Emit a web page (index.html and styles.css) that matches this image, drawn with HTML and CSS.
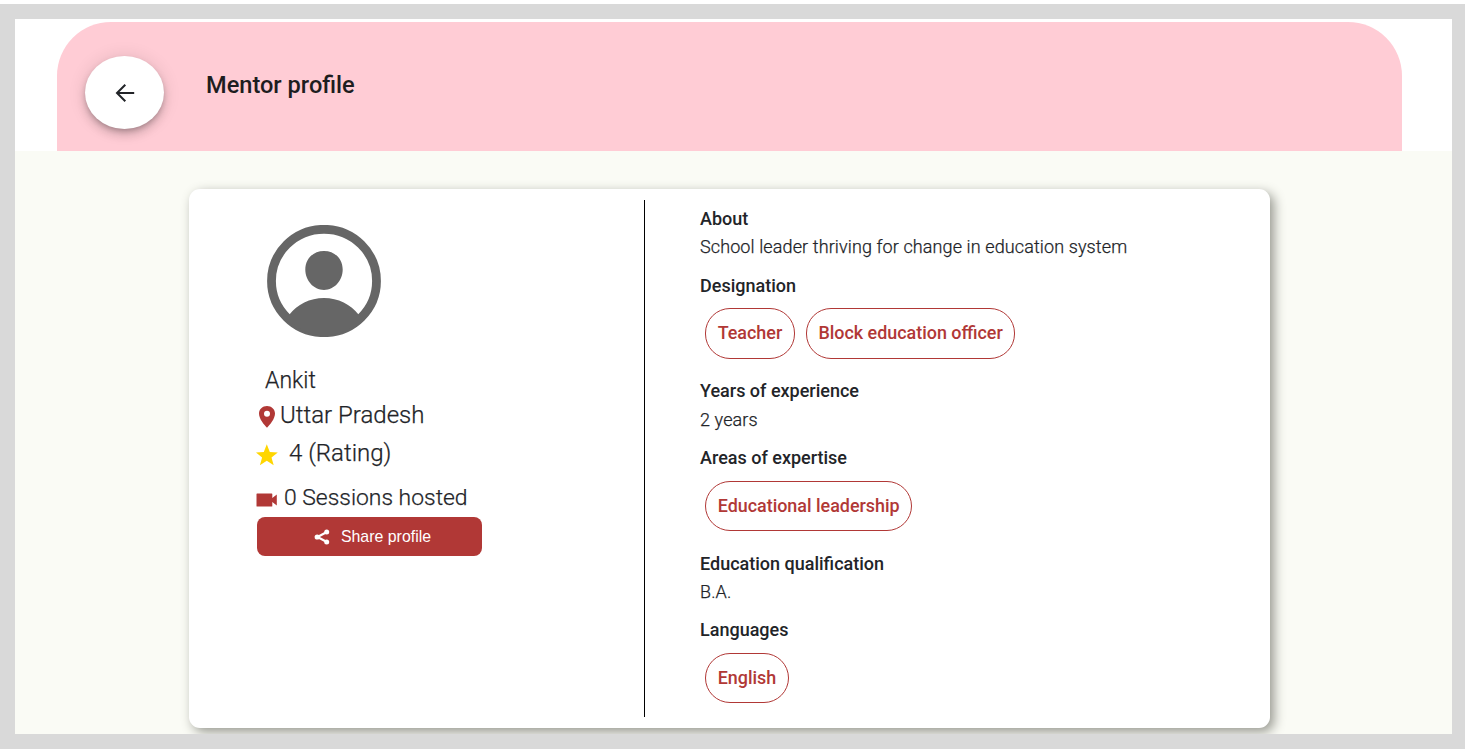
FILE: index.html
```html
<!DOCTYPE html>
<html lang="en">
<head>
<meta charset="utf-8">
<title>Mentor profile</title>
<link rel="stylesheet" href="styles.css">
</head>
<body>
<div class="frame">
  <div class="screen">
    <header class="topbar">
      <div class="banner">
        <button class="back" aria-label="Back">
          <svg width="20" height="20" viewBox="0 0 20 20"><path d="M10.300 1.700 2 10l8.300 8.300M2 10h17.200" fill="none" stroke="#222428" stroke-width="2"/></svg>
        </button>
        <h1 class="title">Mentor profile</h1>
      </div>
    </header>
    <main class="content">
      <section class="card">
        <div class="summary">
          <svg class="avatar" width="114" height="112" viewBox="0 0 114 112"><ellipse cx="57" cy="56" rx="52.500" ry="51.700" fill="none" stroke="#666" stroke-width="8.800"/><path d="M57 26c11 0 18.700 8 18.700 18.600C75.700 55.500 67.500 65 57 65s-18.700-9.500-18.700-20.400C38.300 34 46 26 57 26zM22.500 89.500C30 79.500 43 73 57 73s27 6.500 34.500 16.500L96 91c-9 11-23 19.500-39 19.500S27 102 18 91z" fill="#666"/></svg>
          <div class="name">Ankit</div>
          <div class="fact place">
            <svg width="22" height="24" viewBox="0 0 22 24"><path fill-rule="evenodd" d="M11 1C6.500 1 3 4.300 3 8.600c0 5.400 5.300 11.400 8 14.200 2.700-2.800 8-8.800 8-14.200C19 4.300 15.500 1 11 1zm0 10.800a3 3 0 1 1 0-6 3 3 0 0 1 0 6z" fill="#b13836"/></svg>
            <span>Uttar Pradesh</span>
          </div>
          <div class="fact rating">
            <svg width="22" height="22" viewBox="0 0 22 22"><path d="M10.800.300l3 7.700 8 .4-6.300 5 2.200 7.900-6.900-4.500-6.900 4.500 2.200-7.900L-.2 8.400l8-.4z" fill="#ffd600"/></svg>
            <span>4 (Rating)</span>
          </div>
          <div class="fact sessions">
            <svg width="22" height="14" viewBox="0 0 22 14"><path d="M1.100.500h14.600c.4 0 .6.200.6.600v4l4.500-3.600v11l-4.500-3.600v4c0 .4-.2.600-.6.600H1.100c-.4 0-.6-.2-.6-.6V1.100c0-.4.200-.6.600-.6z" fill="#b13836"/></svg>
            <span>0 Sessions hosted</span>
          </div>
          <button class="share">
            <svg width="16" height="16" viewBox="0 0 16 16"><path d="M12.400 3.200 3.500 8l8.900 4.800" fill="none" stroke="#fff" stroke-width="2.200"/><g fill="#fff"><circle cx="12.700" cy="3" r="2.500"/><circle cx="3.200" cy="8" r="2.600"/><circle cx="12.700" cy="13" r="2.500"/></g></svg>
            <span>Share profile</span>
          </button>
        </div>
        <div class="divider"></div>
        <div class="details">
          <section class="field about">
            <h2>About</h2>
            <p>School leader thriving for change in education system</p>
          </section>
          <section class="field">
            <h2>Designation</h2>
            <div class="chips tall"><span class="chip">Teacher</span><span class="chip">Block education officer</span></div>
          </section>
          <section class="field years">
            <h2>Years of experience</h2>
            <p>2 years</p>
          </section>
          <section class="field">
            <h2>Areas of expertise</h2>
            <div class="chips"><span class="chip">Educational leadership</span></div>
          </section>
          <section class="field education">
            <h2>Education qualification</h2>
            <p>B.A.</p>
          </section>
          <section class="field">
            <h2>Languages</h2>
            <div class="chips"><span class="chip">English</span></div>
          </section>
        </div>
      </section>
    </main>
  </div>
</div>
</body>
</html>
```
FILE: styles.css
```css
* { box-sizing: border-box; }
body {
  margin: 0;
  padding-top: 4px;
  height: 750px;
  overflow: hidden;
  background: #fff;
  color: #222428;
  font-family: Roboto, "Liberation Sans", sans-serif;
}
h1, h2, p { margin: 0; }
svg { display: block; flex: none; }
button { border: 0; margin: 0; }
.frame {
  height: 745px;
  padding: 15px 13px 15px 15px;
  background: #d9d9d9;
}
.screen {
  height: 715px;
  display: flex;
  flex-direction: column;
  overflow: hidden;
  background: #fff;
}
.topbar { height: 132px; padding: 3px 50px 0 42px; }
.banner {
  height: 129px;
  padding: 34px 28px 0;
  display: flex;
  gap: 42px;
  border-radius: 54px 54px 0 0;
  background: #ffccd5;
}
.back {
  width: 79px;
  height: 73px;
  padding: 0;
  display: flex;
  align-items: center;
  justify-content: center;
  border-radius: 50%;
  background: #fff;
  box-shadow: 0 3px 5px -1px rgba(0,0,0,.2), 0 6px 10px rgba(0,0,0,.14), 0 1px 18px rgba(0,0,0,.12);
}
.title {
  padding-top: 14px;
  font-size: 23.600px;
  font-weight: 500;
  line-height: 30px;
  color: #1d1d20;
}
.content { height: 583px; padding: 38px 0 0 174px; background: #fafbf5; }
.card {
  width: 1081px;
  height: 539px;
  display: flex;
  border-radius: 11px;
  background: #fff;
  box-shadow: 4px 4px 12px #96978f;
}
.summary { width: 455px; padding: 36px 0 0 67px; }
.avatar { margin-left: 11px; }
.name, .fact, .field p { font-weight: 300; -webkit-text-stroke: .25px currentColor; }
.name { margin: 28px 0 0 9px; font-size: 23px; line-height: 31px; }
.fact { display: flex; align-items: center; font-size: 24px; line-height: 30px; }
.place { margin-top: 4px; gap: 2px; }
.place svg { margin-top: 4px; }
.rating { margin-top: 8px; gap: 11px; }
.rating svg { margin-top: 4px; }
.sessions { margin-top: 14px; gap: 6px; font-size: 22.900px; }
.sessions svg { margin-top: 5px; }
.sessions span { padding-top: 1px; }
.share {
  width: 225px;
  height: 39px;
  margin: 4px 0 0 1px;
  padding: 0 0 0 6px;
  display: flex;
  align-items: center;
  justify-content: center;
  gap: 11px;
  border-radius: 8px;
  background: #b13836;
  color: #fff;
  font: 15.900px "Liberation Sans", sans-serif;
}
.divider { width: 1px; height: 517px; margin-top: 11px; background: #000; }
.details { padding: 18px 0 0 55px; }
.field h2, .field p { height: 24px; font-size: 18px; line-height: 24px; }
.field h2 { font-weight: 500; }
.field p { margin-top: 4px; letter-spacing: .11px; }
.about { margin-bottom: 15px; }
.years { margin-bottom: 14px; }
.field.years p { margin-top: 5px; }
.chips { display: flex; gap: 11px; height: 50px; margin: 11px 0 21px 5px; }
.chips.tall { height: 51px; margin-top: 10px; margin-bottom: 20px; }
.chip {
  padding: 0 11.500px 2px 11.700px;
  display: flex;
  align-items: center;
  border: 1px solid #b13836;
  border-radius: 25px;
  color: #b13836;
  font-size: 17.920px;
  font-weight: 500;
}
.education { margin-bottom: 14px; }
```
